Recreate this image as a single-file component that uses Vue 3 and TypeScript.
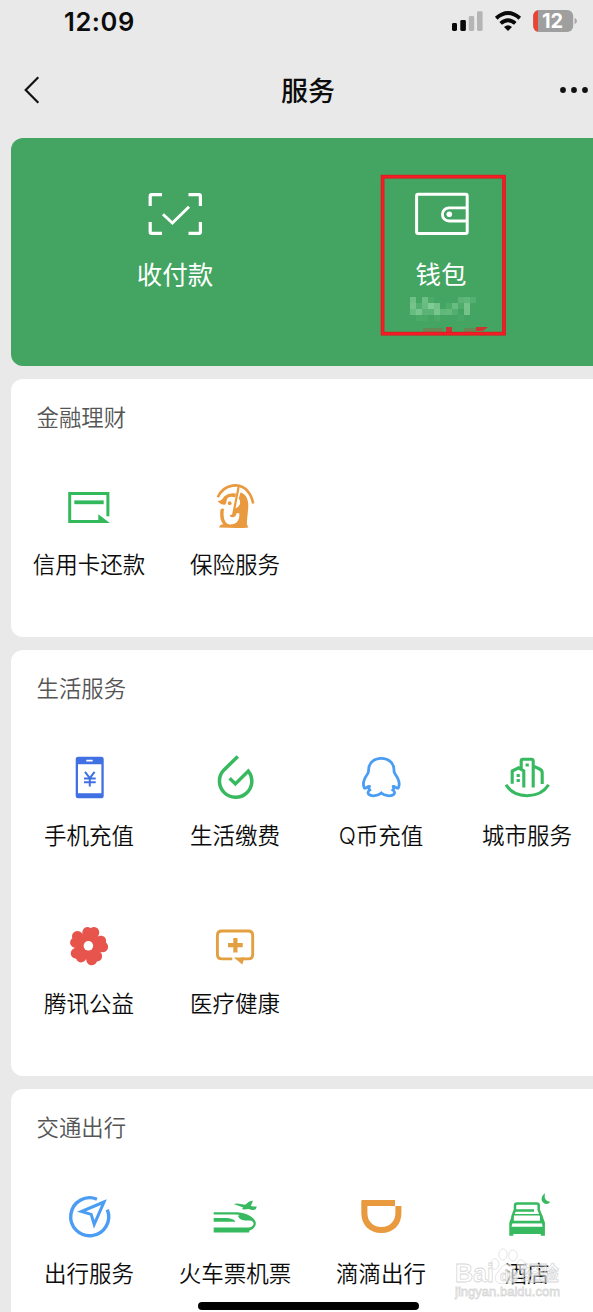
<script setup lang="ts">
interface Service {
  icon: string
  label: string
}
interface Section {
  id: string
  title: string
  items: Service[]
}

const sections: Section[] = [
  {
    id: 'finance',
    title: '金融理财',
    items: [
      { icon: 'card', label: '信用卡还款' },
      { icon: 'insurance', label: '保险服务' },
    ],
  },
  {
    id: 'life',
    title: '生活服务',
    items: [
      { icon: 'phone', label: '手机充值' },
      { icon: 'drop', label: '生活缴费' },
      { icon: 'qq', label: 'Q币充值' },
      { icon: 'city', label: '城市服务' },
      { icon: 'flower', label: '腾讯公益' },
      { icon: 'medical', label: '医疗健康' },
    ],
  },
  {
    id: 'transport',
    title: '交通出行',
    items: [
      { icon: 'travel', label: '出行服务' },
      { icon: 'train', label: '火车票机票' },
      { icon: 'didi', label: '滴滴出行' },
      { icon: 'hotel', label: '酒店' },
    ],
  },
]

const petals: number[] = [10, 82, 154, 226, 298]

// Blurred balance under the wallet label: [column, row, opacity]
const mosaic: number[][] = [
  [0, 0, 0.3], [2, 0, 0.28], [3, 0, 0.06], [8, 0, 0.16], [9, 0, 0.2], [10, 0, 0.12],
  [0, 1, 0.34], [1, 1, 0.12], [2, 1, 0.26], [3, 1, 0.42], [4, 1, 0.32], [6, 1, 0.08], [7, 1, 0.26], [8, 1, 0.08], [9, 1, 0.34],
  [0, 2, 0.26], [1, 2, 0.36], [2, 2, 0.16], [3, 2, 0.16], [4, 2, 0.36], [5, 2, 0.2], [6, 2, 0.22], [7, 2, 0.1], [9, 2, 0.32],
  [1, 3, 0.06], [2, 3, 0.05], [4, 3, 0.06], [8, 3, 0.04],
]
</script>

<template>
  <div class="screen">
    <header class="status">
      <span class="time">12:09</span>
      <svg class="signals" viewBox="0 0 130 26" width="130" height="26">
        <rect x="4" y="15" width="5" height="8" rx="1.4" fill="#0a0a0a" />
        <rect x="12.3" y="12" width="5.6" height="11" rx="1.4" fill="#0a0a0a" />
        <rect x="20.8" y="8" width="5.4" height="15" rx="1.4" fill="#b5b5b5" />
        <rect x="29" y="3.2" width="5.6" height="19.8" rx="1.4" fill="#b5b5b5" />
        <g fill="none" stroke="#0a0a0a" stroke-width="3.8">
          <path d="M48.2 10.2 Q60 -0.2 71.8 10.2" />
          <path d="M52.7 15.4 Q60 9 67.3 15.4" />
        </g>
        <path d="M56 19 Q60 15.6 64 19 L60 23 Z" fill="#0a0a0a" />
        <clipPath id="battery"><rect x="85.2" y="2" width="40" height="22" rx="6" /></clipPath>
        <g clip-path="url(#battery)">
          <rect x="85" y="2" width="41" height="22" fill="#9f9f9f" />
          <rect x="85" y="2" width="5" height="22" fill="#e94434" />
        </g>
        <path d="M126.6 9.8 Q129 11 129 13 T126.6 16.2 Z" fill="#a5a5a5" />
        <text x="104.5" y="20.2" class="battery-text">12</text>
      </svg>
    </header>

    <nav class="nav">
      <svg class="back" viewBox="0 0 20 30" width="20" height="30">
        <path d="M16.3 2.3 L3.7 15 L16.3 27.7" fill="none" stroke="#111" stroke-width="2.2" />
      </svg>
      <h1>服务</h1>
      <svg class="more" viewBox="0 0 32 8" width="32" height="8">
        <circle cx="5" cy="4" r="2.9" /><circle cx="16" cy="4" r="2.9" /><circle cx="27" cy="4" r="2.9" />
      </svg>
    </nav>

    <section class="pay">
      <div class="pay-item">
        <svg viewBox="0 0 60 48" width="60" height="48" fill="none" stroke="#fff" stroke-width="3.2">
          <path d="M5.2 16 V6 Q5.2 4.6 6.6 4.6 H17 M43.5 4.6 H54 Q55.4 4.6 55.4 6 V16 M55.4 32 V42 Q55.4 43.4 54 43.4 H43.5 M17 43.4 H6.6 Q5.2 43.4 5.2 42 V32" />
          <path d="M18 24.2 L27.4 33.1 L44 16.7" stroke-width="2.9" />
        </svg>
        <span>收付款</span>
      </div>
      <div class="pay-item">
        <svg viewBox="0 0 60 48" width="60" height="48" fill="none" stroke="#fff" stroke-width="3">
          <rect x="5.6" y="4.2" width="50.6" height="39.4" rx="1.5" />
          <path d="M56 17.8 H38 A6.6 6.6 0 0 0 38 31 H56" stroke-width="2.8" />
          <circle cx="38.3" cy="24.2" r="2.8" fill="#fff" stroke="none" />
        </svg>
        <span>钱包</span>
        <svg class="marker" viewBox="0 0 126 162" width="126" height="162">
          <g fill="#d8ffe0">
            <rect
              v-for="([c, r, o], i) in mosaic"
              :key="i"
              :x="30 + c * 6"
              :y="123 + r * 6"
              width="6"
              height="6"
              :opacity="o"
            />
          </g>
          <g fill="#cf3434">
            <rect x="66" y="153" width="6" height="5" />
            <path d="M96 153 H108 L103 157 H96 Z" />
            <path d="M43 154 H63 V158 H43 Z M84 154 H96 V158 H84 Z" opacity=".25" />
          </g>
          <rect x="2.6" y="2.7" width="121.4" height="157" fill="none" stroke="#d81f24" stroke-width="3.8" />
          <rect x="2.6" y="2.7" width="121.4" height="157" fill="none" stroke="#fb1a25" stroke-width="1.8" />
        </svg>
      </div>
    </section>

    <section v-for="s in sections" :key="s.id" class="card" :class="s.id">
      <h2>{{ s.title }}</h2>
      <div class="grid">
        <div v-for="item in s.items" :key="item.label" class="cell">
          <svg class="icon" viewBox="0 0 48 48" width="48" height="48" fill="none">
            <g v-if="item.icon === 'card'" stroke="#33b95c">
              <path d="M42.9 32.2 V9.4 H4.7 V37.4 H40" stroke-width="3" />
              <path d="M9.3 18.3 H38.7" stroke-width="3.8" />
              <path d="M33.3 30.2 L44.8 39 H33.3 Z" fill="#33b95c" stroke="none" />
            </g>
            <g v-else-if="item.icon === 'insurance'" stroke="#e99a3e" stroke-width="2.6">
              <path d="M6.8 13.2 C13 -0.5 29.5 -2 36.8 7.4 Q40.7 12 42.2 19.4" />
              <path d="M27.6 3 L22 31.6" stroke-width="2.2" />
              <path
                d="M29.4 8.4 C36 10 37.8 17 37.2 24 L35.8 38.8 Q35.8 41.5 37.4 43.4 Q31 44.4 8 43.6 Q8.6 40.6 12.3 40.3 C8.9 37 8.7 30 9.5 25.6 Q11 23.5 13 25 C12 31 12.4 40.7 20 40.4 C27.5 40.4 28.5 34 28.4 29.5 L25.7 29 Q25 33.8 20.4 33.2 Q18.6 32.4 18.8 31 L22 30.6 L23.5 24.4 Q27 24.2 28.8 20.3 Q29.8 17 27.7 14.8 Z"
                fill="#e99a3e"
                stroke="none"
              />
              <path d="M6.4 17.2 Q11.4 16.3 13 12.4 Q18 8.4 25 9.6 L24.4 13.3 Q17.8 11.4 16 15 Q15.4 19.4 14 20.7 Q11 21.4 6.4 17.2 Z" fill="#e99a3e" stroke="none" />
              <circle cx="18.7" cy="19.2" r="1.9" fill="#e99a3e" stroke="none" />
            </g>
            <g v-else-if="item.icon === 'phone'">
              <path
                fill-rule="evenodd"
                d="M13.2 2.7 H36.2 Q38.7 2.7 38.7 5.2 V41.8 Q38.7 44.3 36.2 44.3 H13.2 Q10.7 44.3 10.7 41.8 V5.2 Q10.7 2.7 13.2 2.7 Z M13 10.3 V39.3 H36.4 V10.3 Z M21.3 5.7 V7.4 H27.7 V5.7 Z"
                fill="#4070e2"
              />
              <path d="M20 17.8 L24.8 24 L29.6 17.8 M24.8 24 V32.6 M19 24.4 H30.7 M19 28.3 H30.7" stroke="#4070e2" stroke-width="2" />
            </g>
            <path
              v-else-if="item.icon === 'drop'"
              d="M26.8 2.4 L12.5 16.4 A16.2 16.2 0 1 0 37.3 17 L24.4 29.9 L18.6 24.3"
              stroke="#36b95f"
              stroke-width="3.5"
            />
            <path
              v-else-if="item.icon === 'qq'"
              d="M24.3 4.4 C16.5 4.4 11.6 9.5 11.6 16 Q11.8 18.5 10.2 20.5 C7 25 5.6 30.5 7.3 34 C9 35.2 10 31.6 13.4 32.5 Q10.4 33.2 12.8 36 Q9.8 38.5 11.8 40.4 C14.5 42.8 21 42 24.3 39 C27.6 42 34.1 42.8 36.8 40.4 Q38.8 38.5 35.8 36 Q38.2 33.2 35.2 32.5 C38.6 31.6 39.6 35.2 41.3 34 C43 30.5 41.6 25 38.4 20.5 Q36.8 18.5 37 16 C37 9.5 32.1 4.4 24.3 4.4 Z"
              stroke="#4b9df3"
              stroke-width="2.8"
            />
            <g v-else-if="item.icon === 'city'" stroke="#36b95f" stroke-width="3.1">
              <path d="M3 30.8 C12 45.3 36.5 45.3 45.6 30.8" />
              <path d="M9.2 29.8 V17 L15.6 13.8 L20.8 16.8 V33.5 M18.2 14.6 V7 Q18.2 5.2 20 5.2 H28.4 Q30.2 5.2 30.2 7 V33.5 M30.5 12.2 L36.6 15 Q39.2 16.2 39.2 18.8 V30" />
              <path d="M22.6 9.5 h3.2 v3 h-3.2 Z M13.6 20 h3.2 v3 h-3.2 Z M13.6 25 h3.2 v3 h-3.2 Z" fill="#36b95f" stroke="none" />
            </g>
            <g v-else-if="item.icon === 'flower'" transform="translate(23.4 23.8)" fill="#e6544c">
              <path
                v-for="a in petals"
                :key="a"
                :transform="`rotate(${a})`"
                d="M0 0 L-7 -8.6 C-10.4 -13.5 -7 -20.2 -0.8 -17.8 C3.5 -22 10.4 -17.6 8 -11.5 L6.8 -8 Z"
              />
              <circle r="4.8" fill="#fff" />
            </g>
            <g v-else-if="item.icon === 'medical'" stroke="#e3a041">
              <path d="M21.3 36.9 H11 Q6.4 36.9 6.4 32.5 V13.4 Q6.4 9 11 9 H37.2 Q41.7 9 41.7 13.4 V32.5 Q41.7 36.9 37.2 36.9 H30" stroke-width="2.9" />
              <path d="M22.8 35.6 H33.5 L31.3 42.6 Z" fill="#e3a041" stroke="none" />
              <path d="M17 23.2 H31.7 M24.4 16 V30.5" stroke-width="4.2" />
            </g>
            <g v-else-if="item.icon === 'travel'" stroke="#4b9df3" stroke-width="3.4">
              <path d="M32 7.2 A19 19 0 1 0 42.3 17.6" />
              <path d="M39 10 L16.4 19.5 L26.2 22.4 L29.2 32.4 Z" stroke-width="3" />
            </g>
            <g v-else-if="item.icon === 'train'" fill="#36b95f">
              <path d="M2.7 20.2 H26 C37 20.7 45 26.5 44.8 31.6 C44.8 34.5 42 38 38.6 38.5 L38 40.4 H2.7 V35.4 H38 C41 35 43 32.8 42.5 30.9 C41.5 28 37.6 28.6 34 28.5 C30 28 27.5 26.5 27 23.8 L29 23 Q27 22.4 25 22.4 H2.7 Z" />
              <path d="M2.7 26 H14 C19 26 23.5 27.2 24.5 29.8 H2.7 Z" />
              <path d="M22.7 12 L26 11.6 L34.3 12.8 L38.2 9.4 L42 8.8 L39.8 13.9 L42.6 14.6 L45.8 14.4 L44.8 17 Q43.5 18.4 41 18 L37.6 17 L33 17.4 L31 17 L32.2 15.6 Z" />
            </g>
            <path
              v-else-if="item.icon === 'didi'"
              fill-rule="evenodd"
              d="M5.3 8 H38 V14 H44.4 V21 C44.4 33 36.5 41 24.4 41 C12.3 41 4.3 33 4.3 21 V9 Q4.3 8 5.3 8 Z M10.4 14 V21 C10.4 29.2 16 35 24.4 35 C32.8 35 38.4 29.2 38.4 21 V14 Z"
              fill="#e99a3e"
            />
            <g v-else stroke="#36b95f" stroke-width="2.5">
              <path d="M9.6 30 V24 L12 17.8 V13.5 Q12 11.5 14 11.5 H33.7 Q35.7 11.5 35.7 13.5 V17.8 L38.2 24 V30 M12.5 18.5 H31 M8 29.9 H40" />
              <path
                fill-rule="evenodd"
                d="M9 23.5 L6.3 30.5 V43.8 H10.3 V42.1 H37.8 V43.8 H41.9 V30.5 L39.3 23.5 Z M11 22 H37 L38.8 29 H9.5 Z M9.4 31.3 H39 L39.6 34.8 H8.5 Z"
                fill="#36b95f"
                stroke="none"
              />
              <path d="M42.2 1.2 C37 4.2 37.5 11 43.3 12 Q46 12 47.3 9.8 C43 9.4 40.5 6 42.2 1.2 Z" fill="#36b95f" stroke="none" />
            </g>
          </svg>
          <span class="label">{{ item.label }}</span>
        </div>
      </div>
    </section>

    <div class="home-bar"></div>
    <svg class="watermark" viewBox="0 0 112 56" width="112" height="56">
      <g fill="#fff" fill-opacity=".6" stroke="#c9c9c9" stroke-opacity=".6" stroke-width=".8">
        <ellipse cx="45" cy="18" rx="4" ry="5.3" />
        <ellipse cx="53" cy="8.5" rx="4.2" ry="5.6" />
        <ellipse cx="63" cy="9.5" rx="4.2" ry="5.6" />
        <ellipse cx="71" cy="19" rx="4" ry="5.3" />
        <path d="M57.5 18 Q62 19 65 24 C71 29 68 39 60 37 Q57.5 36.5 54 37.5 C44 39 43 30 49 25 Q53 18 57.5 18 Z" />
      </g>
      <g fill="#fff" fill-opacity=".5" stroke="#c6c6c6" stroke-opacity=".7" stroke-width=".8">
        <text x="5" y="36" class="wm-large" textLength="39">Bai</text>
        <text x="50" y="35" class="wm-du">du</text>
        <text x="71" y="35" class="wm-cjk" textLength="38">经验</text>
        <text x="5" y="49.5" class="wm-small" textLength="105">jingyan.baidu.com</text>
      </g>
    </svg>
  </div>
</template>

<style>
body {
  margin: 0;
  background: #e9e9e9;
}
</style>

<style scoped>
.screen {
  position: relative;
  width: 593px;
  height: 1312px;
  overflow: hidden;
  background: #e9e9e9;
  color: #0c0c0c;
  font-family: "Liberation Sans", "Noto Sans CJK SC", sans-serif;
}
.status {
  display: flex;
  justify-content: space-between;
  height: 43px;
  padding: 0 15px 0 64px;
}
.time {
  font: 600 25.5px/44px Inter, sans-serif;
  letter-spacing: 0.6px;
}
.signals {
  margin-top: 8px;
}
.battery-text {
  font: 700 20px Inter, sans-serif;
  fill: #fff;
  text-anchor: middle;
}
.nav {
  display: flex;
  align-items: center;
  justify-content: space-between;
  box-sizing: border-box;
  height: 95px;
  padding: 0 3px 2px 22px;
}
.back {
  margin-right: 16px;
}
.nav h1 {
  margin: 0;
  font: 500 27px/40px "Noto Sans CJK SC", sans-serif;
}
.more {
  fill: #111;
}
.pay {
  display: flex;
  height: 228px;
  margin-left: 11px;
  padding-left: 31px;
  border-radius: 12px 0 0 12px;
  background: #43a561;
}
.pay-item {
  position: relative;
  display: flex;
  flex: 0 0 266px;
  flex-direction: column;
  align-items: center;
  gap: 17px;
  padding-top: 52px;
  color: #fff;
  font: 400 25.5px/36px "Noto Sans CJK SC", sans-serif;
}
.marker {
  position: absolute;
  top: 36px;
  left: 72px;
}
.card {
  margin: 13px 0 0 11px;
  padding: 0 0 57px 5px;
  border-radius: 12px 0 0 12px;
  background: #fff;
}
.card h2 {
  margin: 0;
  padding-left: 20.5px;
  color: #555;
  font: 350 22.4px/74px "Noto Sans CJK SC", sans-serif;
}
.grid {
  display: grid;
  grid-template-columns: repeat(4, 146px);
  row-gap: 71px;
  padding-top: 30px;
}
.cell {
  display: flex;
  flex-direction: column;
  align-items: center;
  gap: 19px;
}
.finance .grid {
  padding-top: 31px;
}
.finance .cell {
  gap: 18px;
}
.transport .grid {
  padding-top: 29px;
}
.label {
  font: 350 22.5px/30px Inter, "Noto Sans CJK SC", sans-serif;
  white-space: nowrap;
}
.home-bar {
  position: absolute;
  top: 1302px;
  left: 198px;
  width: 221px;
  height: 8px;
  border-radius: 4px;
  background: #000;
}
.watermark {
  position: absolute;
  top: 1246px;
  left: 450px;
}
.wm-large {
  font: 700 25px "Liberation Sans", sans-serif;
}
.wm-du {
  font: 700 14px "Liberation Sans", sans-serif;
}
.wm-cjk {
  font: 700 20px "Noto Sans CJK SC", sans-serif;
}
.wm-small {
  font: 400 13px "Liberation Sans", sans-serif;
}
</style>
